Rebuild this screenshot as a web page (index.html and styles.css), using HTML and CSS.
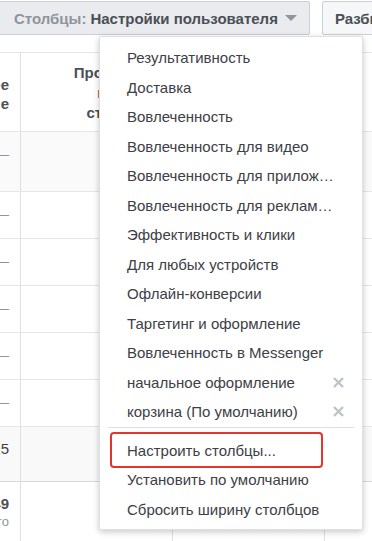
FILE: index.html
```html
<!DOCTYPE html>
<html lang="ru">

<head>
    <meta charset="UTF-8">
    <meta name="viewport" content="width=device-width, initial-scale=1.0">
    <title>Столбцы</title>
    <link rel="stylesheet" href="styles.css">
</head>

<body>
    <div class="toolbar">
        <button class="btn btn-open">
            <span class="btn-label">Столбцы:</span> Настройки пользователя
            <span class="caret"></span>
        </button>
        <button class="btn btn-plain">Разбивка</button>
    </div>

    <div class="table-wrap">
        <table class="grid">
            <tr class="head">
                <th class="col-name">Последнее<br>изменение</th>
                <th class="col-num">Просмотры<br>целевой<br>страницы</th>
                <th class="col-num">Цена за<br>результат</th>
                <th class="col-num">Охват</th>
            </tr>
            <tr class="row row-first">
                <td class="col-name"><span class="dash">—</span></td>
                <td></td><td></td><td></td>
            </tr>
            <tr class="row">
                <td class="col-name"><span class="dash">—</span></td>
                <td></td><td></td><td></td>
            </tr>
            <tr class="row">
                <td class="col-name"><span class="dash">—</span></td>
                <td></td><td></td><td></td>
            </tr>
            <tr class="row">
                <td class="col-name"><span class="dash">—</span></td>
                <td></td><td></td><td></td>
            </tr>
            <tr class="row">
                <td class="col-name"><span class="dash">—</span></td>
                <td></td><td></td><td></td>
            </tr>
            <tr class="row">
                <td class="col-name"><span class="dash">—</span></td>
                <td></td><td></td><td></td>
            </tr>
            <tr class="row row-hover">
                <td class="col-name">15</td>
                <td></td><td></td><td></td>
            </tr>
            <tr class="row row-total">
                <td class="col-name"><b>4 449</b><span class="total-label">Итого</span></td>
                <td></td><td></td><td></td>
            </tr>
        </table>
    </div>

    <div class="menu">
        <ul class="menu-list">
            <li class="menu-item">Результативность</li>
            <li class="menu-item">Доставка</li>
            <li class="menu-item">Вовлеченность</li>
            <li class="menu-item">Вовлеченность для видео</li>
            <li class="menu-item">Вовлеченность для приложения</li>
            <li class="menu-item">Вовлеченность для рекламы на холсте</li>
            <li class="menu-item">Эффективность и клики</li>
            <li class="menu-item">Для любых устройств</li>
            <li class="menu-item">Офлайн-конверсии</li>
            <li class="menu-item">Таргетинг и оформление</li>
            <li class="menu-item">Вовлеченность в Messenger</li>
            <li class="menu-item menu-saved">
                <span class="item-text">начальное оформление</span>
                <svg class="remove" width="11" height="11" viewBox="0 0 11 11">
                    <path d="M1 1L10 10M10 1L1 10" />
                </svg>
            </li>
            <li class="menu-item menu-saved">
                <span class="item-text">корзина (По умолчанию)</span>
                <svg class="remove" width="11" height="11" viewBox="0 0 11 11">
                    <path d="M1 1L10 10M10 1L1 10" />
                </svg>
            </li>
        </ul>
        <div class="menu-sep"></div>
        <ul class="menu-list">
            <li class="menu-item menu-marked">Настроить столбцы...</li>
            <li class="menu-item">Установить по умолчанию</li>
            <li class="menu-item">Сбросить ширину столбцов</li>
        </ul>
    </div>
</body>

</html>
```

FILE: styles.css
```css
* {
    padding: 0;
    margin: 0;
    box-sizing: border-box;
    font-family: 'Liberation Sans', Arial, Helvetica, sans-serif;
}

:root {
    --text-dark: #3d4046;
    --text-mid: #4b4f56;
    --text-light: #90949c;
    --line: #e5e6e9;
    --line-dark: #dddfe2;
    --btn-border: #ccd0d5;
    --marker: #e3352c;
}

body {
    position: relative;
    width: 372px;
    height: 541px;
    overflow: hidden;
    background: #fff;
    color: var(--text-dark);
    font-size: 15px;
}

/* toolbar */

.toolbar {
    display: flex;
    gap: 12px;
    padding-top: 1px;
    margin-left: -3px;
    white-space: nowrap;
}

.btn {
    display: flex;
    align-items: center;
    flex-shrink: 0;
    height: 34px;
    padding: 0 12px 0 16px;
    border: 1px solid var(--btn-border);
    border-radius: 2px;
    background: #f6f7f9;
    color: var(--text-mid);
    font-size: 15px;
    font-weight: bold;
}

.btn-open {
    background: #e9ebee;
}

.btn-plain {
    padding-left: 12px;
}

.btn-label {
    color: var(--text-light);
    margin-right: 4px;
}

.caret {
    width: 0;
    height: 0;
    margin-left: 7px;
    border-left: 6px solid transparent;
    border-right: 6px solid transparent;
    border-top: 6px solid var(--text-light);
}

/* table */

.table-wrap {
    margin-top: 17px;
    margin-left: -120px;
}

.grid {
    border-collapse: collapse;
    table-layout: fixed;
    width: 596px;
}

.grid th,
.grid td {
    border: 1px solid var(--line);
    border-left-color: var(--line-dark);
    border-right-color: var(--line-dark);
    vertical-align: top;
    overflow: hidden;
    white-space: nowrap;
}

.grid .col-name {
    width: 140px;
    padding: 13px 11px 0 0;
    text-align: right;
    line-height: 18px;
}

.grid .col-num {
    width: 152px;
    padding: 0 12px 0 0;
    text-align: right;
}

.head th {
    height: 79px;
    vertical-align: middle;
    font-size: 15px;
    font-weight: bold;
    color: var(--text-mid);
}

.head .col-name {
    padding-top: 4px;
    line-height: 19px;
}

.head .col-num {
    padding-top: 2px;
    line-height: 20px;
}

.row td {
    height: 47px;
}

.row-first td {
    height: 60px;
    background: #fafafa;
}

.row-hover td {
    height: 55px;
    padding-top: 12px;
    background: #f9f9f9;
    border-bottom: 1px solid #d6d8dc;
}

.row-total td {
    height: 70px;
    padding-top: 11px;
    border-top: 1px solid #d6d8dc;
}

.dash {
    color: var(--text-light);
}

.row-total b {
    display: block;
    color: var(--text-mid);
}

.total-label {
    display: block;
    font-size: 13px;
    color: var(--text-light);
}

/* dropdown menu */

.menu {
    position: absolute;
    top: 36px;
    left: 99px;
    width: 264px;
    padding: 6px 0 5px;
    background: #fff;
    border: 1px solid rgba(0, 0, 0, .12);
    border-radius: 2px;
    box-shadow: 0 2px 6px rgba(0, 0, 0, .22);
}

.menu-list {
    list-style: none;
}

.menu-item {
    position: relative;
    display: block;
    height: 29.5px;
    padding: 0 28px 0 27px;
    font-size: 15px;
    line-height: 29.5px;
    color: var(--text-dark);
    white-space: nowrap;
    overflow: hidden;
    text-overflow: ellipsis;
}

.menu-saved {
    display: flex;
    align-items: center;
    justify-content: space-between;
    padding-right: 18px;
}

.item-text {
    overflow: hidden;
    text-overflow: ellipsis;
}

.remove {
    flex-shrink: 0;
}

.remove path {
    stroke: #bec3c9;
    stroke-width: 2.4;
    fill: none;
}

.menu-sep {
    height: 1px;
    margin: 0 8px 8px;
    background: var(--line-dark);
}

.menu-marked {
    overflow: visible;
}

.menu-marked::after {
    content: '';
    position: absolute;
    top: -4px;
    left: 10px;
    box-sizing: border-box;
    width: 213px;
    height: 36px;
    border: 2px solid var(--marker);
    border-radius: 4px;
}
```
